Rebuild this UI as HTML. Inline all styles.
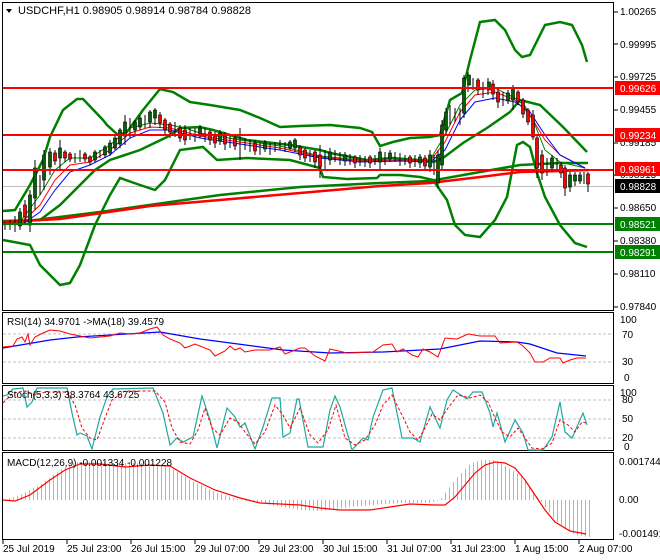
<!DOCTYPE html>
<html><head><meta charset="utf-8"><style>
html,body{margin:0;padding:0;background:#fff;}
svg{display:block;font-family:"Liberation Sans",Tahoma,sans-serif;}
</style></head><body>
<svg width="660" height="560" viewBox="0 0 660 560" xmlns="http://www.w3.org/2000/svg">
<defs>
<pattern id="hist" width="4" height="10" patternUnits="userSpaceOnUse"><rect x="1" y="0" width="1" height="10" fill="#b4b4b4"/></pattern>
</defs>
<rect width="660" height="560" fill="#fff"/>
<g fill="none" stroke="#000" stroke-width="1">
<rect x="2.5" y="2.5" width="611" height="308"/>
<rect x="2.5" y="312.5" width="611" height="71"/>
<rect x="2.5" y="385.5" width="611" height="65"/>
<rect x="2.5" y="452.5" width="611" height="87"/>
</g>
<line x1="3" y1="186.5" x2="613" y2="186.5" stroke="#c0c0c0"/>
<!-- bollinger -->
<polyline fill="none" stroke="#008000" stroke-width="2.5" points="3,211 15,210 30,185 43,160 50,137 63,110 77,99 83,99 103,120 107,125 118,135 127,132 143,110 160,89 173,92 190,102 210,105 240,110 260,118 280,127 300,126 330,125 360,128 372,132 380,146 393,142 410,138 430,137 440,135 450,100 462,93 470,60 480,22 495,20 505,30 515,50 522,57 530,55 545,25 560,22 572,25 582,45 587,62"/>
<polyline fill="none" stroke="#008000" stroke-width="2.5" points="3,221 40,220 60,205 80,185 95,170 110,160 140,150 167,137 180,128 200,127 213,130 247,140 290,145 320,150 330,153 367,160 393,158 433,162 443,158 463,143 487,128 510,112 520,100 540,105 563,127 587,152"/>
<polyline fill="none" stroke="#008000" stroke-width="2.5" points="3,240 30,245 40,265 60,285 70,283 80,265 95,225 110,195 120,178 140,185 155,190 165,180 180,150 203,147 217,160 247,158 290,160 320,168 323,177 347,179 377,178 380,175 400,175 420,177 433,180 447,200 455,225 465,235 480,237 495,220 507,197 517,145 523,142 530,147 537,173 545,197 560,225 575,243 587,247"/>
<polyline fill="none" stroke="#008000" stroke-width="2.5" points="3,224 100,212 220,195 300,187 380,183 430,181 480,172 520,165 560,163 588,163"/>
<polyline fill="none" stroke="#ff0000" stroke-width="2.5" points="3,222 60,219 150,206 220,200 300,193 380,186 430,183 480,177 520,172 560,171 588,170"/>
<!-- small MAs -->
<polyline fill="none" stroke="#008000" stroke-width="1" points="20,222 40,195 55,170 70,158 90,158 110,145 130,128 150,123 170,125 185,128 200,133 240,140 280,146 320,156 360,160 400,158 430,160 445,135 460,105 475,90 495,88 515,98 525,106 535,125 545,150 560,162 585,168"/>
<polyline fill="none" stroke="#ff0000" stroke-width="1" points="20,224 40,205 55,180 70,165 90,162 110,150 130,133 150,127 170,128 200,136 240,142 280,148 320,157 360,161 400,160 430,161 445,142 460,112 475,95 495,92 515,100 530,115 545,140 560,155 585,168"/>
<polyline fill="none" stroke="#0000ff" stroke-width="1" points="20,226 40,212 55,190 70,172 90,165 110,155 130,138 150,130 170,130 200,138 240,144 280,150 320,158 360,162 400,161 430,162 445,150 460,120 475,102 495,98 515,102 530,112 545,135 560,155 585,168"/>
<!-- candles: wicks -->
<g stroke="#000" stroke-width="1">
<line x1="5" y1="222" x2="5" y2="230"/><line x1="10" y1="220" x2="10" y2="230"/><line x1="15" y1="216" x2="15" y2="232"/><line x1="20" y1="208" x2="20" y2="230"/><line x1="25" y1="200" x2="25" y2="225"/><line x1="30" y1="190" x2="30" y2="232"/><line x1="35" y1="160" x2="35" y2="210"/><line x1="40" y1="175" x2="40" y2="195"/><line x1="44" y1="150" x2="44" y2="190"/><line x1="50" y1="148" x2="50" y2="175"/><line x1="55" y1="150" x2="55" y2="165"/><line x1="60" y1="140" x2="60" y2="170"/><line x1="65" y1="150" x2="65" y2="162"/><line x1="70" y1="152" x2="70" y2="162"/><line x1="75" y1="153" x2="75" y2="163"/><line x1="80" y1="150" x2="80" y2="162"/><line x1="85" y1="152" x2="85" y2="162"/><line x1="90" y1="155" x2="90" y2="165"/><line x1="95" y1="150" x2="95" y2="162"/><line x1="100" y1="150" x2="100" y2="158"/><line x1="105" y1="145" x2="105" y2="158"/><line x1="110" y1="140" x2="110" y2="156"/><line x1="115" y1="135" x2="115" y2="150"/><line x1="120" y1="128" x2="120" y2="148"/><line x1="125" y1="115" x2="125" y2="145"/><line x1="130" y1="118" x2="130" y2="138"/><line x1="135" y1="120" x2="135" y2="135"/><line x1="140" y1="115" x2="140" y2="130"/><line x1="145" y1="115" x2="145" y2="128"/><line x1="150" y1="110" x2="150" y2="128"/><line x1="155" y1="108" x2="155" y2="125"/><line x1="160" y1="112" x2="160" y2="128"/><line x1="165" y1="118" x2="165" y2="135"/><line x1="170" y1="122" x2="170" y2="138"/><line x1="175" y1="122" x2="175" y2="137"/><line x1="180" y1="125" x2="180" y2="142"/><line x1="185" y1="125" x2="185" y2="145"/><line x1="190" y1="128" x2="190" y2="140"/><line x1="195" y1="128" x2="195" y2="142"/><line x1="200" y1="125" x2="200" y2="138"/><line x1="205" y1="128" x2="205" y2="142"/><line x1="210" y1="130" x2="210" y2="145"/><line x1="215" y1="132" x2="215" y2="148"/><line x1="220" y1="130" x2="220" y2="145"/><line x1="225" y1="132" x2="225" y2="150"/><line x1="230" y1="135" x2="230" y2="148"/><line x1="235" y1="135" x2="235" y2="150"/><line x1="240" y1="128" x2="240" y2="160"/><line x1="245" y1="138" x2="245" y2="150"/><line x1="250" y1="140" x2="250" y2="152"/><line x1="255" y1="140" x2="255" y2="155"/><line x1="260" y1="142" x2="260" y2="155"/><line x1="265" y1="140" x2="265" y2="152"/><line x1="270" y1="143" x2="270" y2="155"/><line x1="275" y1="142" x2="275" y2="152"/><line x1="280" y1="140" x2="280" y2="150"/><line x1="285" y1="142" x2="285" y2="152"/><line x1="290" y1="140" x2="290" y2="150"/><line x1="295" y1="138" x2="295" y2="152"/><line x1="300" y1="145" x2="300" y2="160"/><line x1="305" y1="148" x2="305" y2="162"/><line x1="310" y1="150" x2="310" y2="162"/><line x1="315" y1="150" x2="315" y2="168"/><line x1="320" y1="145" x2="320" y2="178"/><line x1="325" y1="150" x2="325" y2="170"/><line x1="330" y1="148" x2="330" y2="165"/><line x1="335" y1="150" x2="335" y2="162"/><line x1="340" y1="152" x2="340" y2="165"/><line x1="345" y1="152" x2="345" y2="166"/><line x1="350" y1="154" x2="350" y2="165"/><line x1="355" y1="155" x2="355" y2="168"/><line x1="360" y1="155" x2="360" y2="166"/><line x1="365" y1="156" x2="365" y2="167"/><line x1="370" y1="155" x2="370" y2="168"/><line x1="375" y1="155" x2="375" y2="165"/><line x1="380" y1="148" x2="380" y2="170"/><line x1="385" y1="152" x2="385" y2="165"/><line x1="390" y1="150" x2="390" y2="162"/><line x1="395" y1="152" x2="395" y2="162"/><line x1="400" y1="153" x2="400" y2="166"/><line x1="405" y1="155" x2="405" y2="165"/><line x1="410" y1="155" x2="410" y2="168"/><line x1="415" y1="155" x2="415" y2="167"/><line x1="420" y1="154" x2="420" y2="168"/><line x1="425" y1="155" x2="425" y2="170"/><line x1="430" y1="150" x2="430" y2="172"/><line x1="434" y1="155" x2="434" y2="175"/><line x1="438" y1="150" x2="438" y2="188"/><line x1="442" y1="120" x2="442" y2="170"/><line x1="446" y1="108" x2="446" y2="135"/><line x1="450" y1="105" x2="450" y2="125"/><line x1="455" y1="108" x2="455" y2="122"/><line x1="460" y1="108" x2="460" y2="125"/><line x1="464" y1="75" x2="464" y2="118"/><line x1="468" y1="72" x2="468" y2="92"/><line x1="473" y1="78" x2="473" y2="90"/><line x1="478" y1="78" x2="478" y2="95"/><line x1="483" y1="82" x2="483" y2="98"/><line x1="488" y1="78" x2="488" y2="95"/><line x1="493" y1="80" x2="493" y2="100"/><line x1="498" y1="88" x2="498" y2="108"/><line x1="503" y1="92" x2="503" y2="106"/><line x1="508" y1="90" x2="508" y2="104"/><line x1="513" y1="85" x2="513" y2="110"/><line x1="518" y1="90" x2="518" y2="105"/><line x1="523" y1="98" x2="523" y2="118"/><line x1="528" y1="108" x2="528" y2="125"/><line x1="533" y1="110" x2="533" y2="140"/><line x1="537" y1="135" x2="537" y2="178"/><line x1="542" y1="150" x2="542" y2="180"/><line x1="547" y1="158" x2="547" y2="176"/><line x1="552" y1="155" x2="552" y2="172"/><line x1="557" y1="158" x2="557" y2="170"/><line x1="561" y1="162" x2="561" y2="178"/><line x1="565" y1="165" x2="565" y2="196"/><line x1="570" y1="172" x2="570" y2="192"/><line x1="575" y1="172" x2="575" y2="186"/><line x1="580" y1="172" x2="580" y2="184"/><line x1="584" y1="172" x2="584" y2="184"/><line x1="588" y1="172" x2="588" y2="192"/>
</g>
<!-- bodies: green (bull) -->
<g fill="#006400" stroke="#000" stroke-width="0.6">
<rect x="18.5" y="212" width="3" height="14"/><rect x="28.5" y="195" width="3" height="30"/><rect x="33.5" y="168" width="3" height="30"/><rect x="42.5" y="155" width="3" height="25"/><rect x="48.5" y="152" width="3" height="15"/><rect x="58.5" y="148" width="3" height="10"/><rect x="93.5" y="152" width="3" height="8"/><rect x="103.5" y="147" width="3" height="8"/><rect x="108.5" y="143" width="3" height="10"/><rect x="113.5" y="138" width="3" height="10"/><rect x="118.5" y="130" width="3" height="14"/><rect x="123.5" y="122" width="3" height="14"/><rect x="133.5" y="122" width="3" height="8"/><rect x="138.5" y="118" width="3" height="9"/><rect x="148.5" y="112" width="3" height="10"/><rect x="153.5" y="110" width="3" height="8"/><rect x="198.5" y="128" width="3" height="8"/><rect x="218.5" y="133" width="3" height="8"/><rect x="263.5" y="143" width="3" height="6"/><rect x="288.5" y="142" width="3" height="6"/><rect x="293.5" y="140" width="3" height="8"/><rect x="328.5" y="152" width="3" height="8"/><rect x="343.5" y="155" width="3" height="6"/><rect x="378.5" y="152" width="3" height="10"/><rect x="388.5" y="153" width="3" height="6"/><rect x="418.5" y="157" width="3" height="6"/><rect x="428.5" y="155" width="3" height="12"/><rect x="436.5" y="155" width="3" height="28"/><rect x="440.5" y="125" width="3" height="40"/><rect x="444.5" y="112" width="3" height="18"/><rect x="462.5" y="78" width="3" height="35"/><rect x="467.5" y="75" width="3" height="10"/><rect x="487.5" y="82" width="3" height="8"/><rect x="506.5" y="93" width="3" height="8"/><rect x="511.5" y="88" width="3" height="12"/><rect x="550.5" y="158" width="3" height="10"/><rect x="568.5" y="175" width="3" height="12"/><rect x="573.5" y="175" width="3" height="6"/><rect x="578.5" y="175" width="3" height="6"/>
</g>
<!-- bodies: red (bear) -->
<g fill="#ff0000" stroke="#000" stroke-width="0.6">
<rect x="23.5" y="205" width="3" height="12"/><rect x="53.5" y="153" width="3" height="8"/><rect x="63.5" y="152" width="3" height="6"/><rect x="68.5" y="154" width="3" height="5"/><rect x="83.5" y="154" width="3" height="5"/><rect x="88.5" y="157" width="3" height="5"/><rect x="158.5" y="115" width="3" height="8"/><rect x="163.5" y="120" width="3" height="10"/><rect x="168.5" y="124" width="3" height="8"/><rect x="178.5" y="128" width="3" height="10"/><rect x="183.5" y="130" width="3" height="10"/><rect x="208.5" y="132" width="3" height="8"/><rect x="213.5" y="135" width="3" height="8"/><rect x="223.5" y="136" width="3" height="8"/><rect x="233.5" y="138" width="3" height="8"/><rect x="253.5" y="143" width="3" height="8"/><rect x="298.5" y="147" width="3" height="8"/><rect x="303.5" y="150" width="3" height="8"/><rect x="313.5" y="152" width="3" height="10"/><rect x="318.5" y="155" width="3" height="12"/><rect x="353.5" y="157" width="3" height="6"/><rect x="368.5" y="157" width="3" height="6"/><rect x="408.5" y="157" width="3" height="6"/><rect x="423.5" y="158" width="3" height="8"/><rect x="476.5" y="80" width="3" height="10"/><rect x="491.5" y="84" width="3" height="10"/><rect x="496.5" y="92" width="3" height="10"/><rect x="516.5" y="92" width="3" height="10"/><rect x="521.5" y="100" width="3" height="14"/><rect x="526.5" y="110" width="3" height="12"/><rect x="531.5" y="115" width="3" height="22"/><rect x="535.5" y="138" width="3" height="30"/><rect x="540.5" y="155" width="3" height="18"/><rect x="559.5" y="165" width="3" height="8"/><rect x="563.5" y="168" width="3" height="20"/><rect x="586.5" y="174" width="3" height="10"/>
</g>
<!-- levels -->
<line x1="3" y1="88" x2="613" y2="88" stroke="#ff0000" stroke-width="2"/>
<line x1="3" y1="135" x2="613" y2="135" stroke="#ff0000" stroke-width="2"/>
<line x1="3" y1="170" x2="613" y2="170" stroke="#ff0000" stroke-width="2"/>
<line x1="3" y1="224" x2="613" y2="224" stroke="#008000" stroke-width="2"/>
<line x1="3" y1="252" x2="613" y2="252" stroke="#008000" stroke-width="2"/>
<path d="M6,9 L12,9 L9,13 Z" fill="#000"/>
<text x="18" y="14" font-size="11">USDCHF,H1  0.98905 0.98914 0.98784 0.98828</text>
<g font-size="10" fill="#000">
<g stroke="#000"><line x1="614" y1="12" x2="618" y2="12"/><line x1="614" y1="44" x2="618" y2="44"/><line x1="614" y1="77" x2="618" y2="77"/><line x1="614" y1="110" x2="618" y2="110"/><line x1="614" y1="143" x2="618" y2="143"/><line x1="614" y1="175" x2="618" y2="175"/><line x1="614" y1="208" x2="618" y2="208"/><line x1="614" y1="241" x2="618" y2="241"/><line x1="614" y1="274" x2="618" y2="274"/><line x1="614" y1="307" x2="618" y2="307"/></g>
<text x="620" y="15">1.00265</text>
<text x="620" y="48">0.99995</text>
<text x="620" y="80">0.99725</text>
<text x="620" y="113">0.99455</text>
<text x="620" y="146">0.99185</text>
<text x="620" y="178">0.98915</text>
<text x="620" y="211">0.98650</text>
<text x="620" y="244">0.98380</text>
<text x="620" y="277">0.98110</text>
<text x="620" y="310">0.97840</text>
<rect x="615" y="81" width="45" height="14" fill="#ff0000"/><text x="620" y="92" fill="#fff">0.99626</text>
<rect x="615" y="128" width="45" height="14" fill="#ff0000"/><text x="620" y="139" fill="#fff">0.99234</text>
<rect x="615" y="162" width="45" height="14" fill="#ff0000"/><text x="620" y="173" fill="#fff">0.98961</text>
<rect x="615" y="179" width="45" height="14" fill="#000"/><text x="620" y="190" fill="#fff">0.98828</text>
<rect x="615" y="217" width="45" height="14" fill="#008000"/><text x="620" y="228" fill="#fff">0.98521</text>
<rect x="615" y="245" width="45" height="14" fill="#008000"/><text x="620" y="256" fill="#fff">0.98291</text>
</g>
<!-- RSI -->
<g stroke="#c0c0c0" stroke-dasharray="3,2"><line x1="3" y1="334" x2="613" y2="334"/><line x1="3" y1="362" x2="613" y2="362"/></g>
<polyline fill="none" stroke="#0000ff" stroke-width="1.2" points="3,348 50,340 77,337 160,332 200,339 283,350 330,353 383,352 440,349 480,341 517,342 530,344 557,353 586,356"/>
<polyline fill="none" stroke="#ff0000" stroke-width="1" points="3,347 13,346 17,339 22,337 25,342 28,334 30,345 35,337 43,333 50,330 60,331 70,334 80,336 90,338 100,337 110,336 120,333 130,334 140,333 150,329 157,327 163,335 170,339 180,343 185,348 195,344 210,350 215,356 225,351 230,346 235,350 240,348 245,352 255,350 270,350 280,347 285,354 290,352 300,348 305,348 315,356 325,361 330,349 347,353 373,352 383,345 392,344 397,352 403,349 412,355 418,357 423,349 430,352 438,357 445,338 457,339 468,334 480,336 495,336 500,343 517,342 523,346 530,353 535,362 543,362 550,358 560,358 563,363 570,360 577,358 586,358"/>
<text x="7" y="325" font-size="10">RSI(14) 34.9701   -&gt;MA(18) 39.4579</text>
<g font-size="10"><text x="620" y="323">100</text><text x="622" y="338">70</text><text x="622" y="365">30</text><text x="624" y="381">0</text></g>
<!-- Stoch -->
<g stroke="#c0c0c0" stroke-dasharray="3,2"><line x1="3" y1="400" x2="613" y2="400"/><line x1="3" y1="419" x2="613" y2="419"/><line x1="3" y1="438" x2="613" y2="438"/></g>
<polyline fill="none" stroke="#20a8a0" stroke-width="1.2" points="3,396 7,395 13,389 23,388 27,407 32,402 37,388 67,388 72,413 77,435 80,433 87,436 92,449 100,417 107,397 113,389 153,388 163,413 170,445 177,438 183,442 193,437 202,396 210,420 217,448 227,408 235,417 240,427 245,423 255,449 263,427 272,398 280,398 283,437 290,433 297,399 299,399 308,447 323,447 330,410 335,396 340,407 352,450 363,438 368,440 373,417 383,390 392,388 402,438 413,438 420,442 430,407 440,428 447,400 453,390 467,399 473,392 482,392 490,413 493,427 497,413 505,442 515,420 523,433 528,450 543,450 552,437 560,402 565,432 572,438 583,413 587,425"/>
<polyline fill="none" stroke="#ff0000" stroke-width="1" stroke-dasharray="3,2" points="3,403 13,393 25,391 35,395 45,392 67,392 75,405 82,428 90,438 97,440 105,418 112,400 125,391 155,391 165,402 172,428 180,442 190,444 198,430 205,408 212,428 220,435 230,418 238,422 245,432 255,444 265,432 275,405 283,415 290,428 300,408 310,435 318,443 328,430 336,405 345,438 355,445 365,440 375,425 383,405 392,395 402,415 410,432 418,440 425,428 432,414 440,420 448,408 458,395 470,398 480,395 488,402 495,418 502,432 510,437 518,428 525,438 532,448 542,449 552,443 560,420 568,425 575,432 582,422 586,423"/>
<text x="7" y="398" font-size="10">Stoch(5,3,3) 38.3764 43.6725</text>
<g font-size="10"><text x="620" y="396">100</text><text x="622" y="403">80</text><text x="622" y="422">50</text><text x="622" y="441">20</text><text x="624" y="450">0</text></g>
<!-- MACD -->
<polygon fill="url(#hist)" points="3,500 20,495 40,485 60,470 75,462 100,462 140,463 165,466 175,470 190,480 215,492 240,500 260,503 300,510 320,511 360,506 400,503 430,503 440,500 455,480 470,464 480,460 495,460 505,466 520,475 532,490 540,500 590,500 590,537 575,535 555,520 540,500 535,500 520,500 440,500 3,500"/>
<polyline fill="none" stroke="#ff0000" stroke-width="1.2" points="3,500 15,501 30,495 50,480 65,470 80,464 100,464 125,467 150,465 170,466 190,478 215,490 240,498 260,503 300,505 320,508 340,510 370,510 390,507 410,504 435,505 445,505 455,497 465,485 475,473 485,465 495,462 505,463 515,468 525,480 535,495 545,510 555,522 570,531 586,534"/>
<text x="7" y="466" font-size="10">MACD(12,26,9) -0.001334 -0.001228</text>
<g font-size="10"><text x="619" y="465">0.001744</text><text x="619" y="503">0.00</text><text x="619" y="537">-0.001491</text></g>
<g stroke="#000"><line x1="3" y1="540" x2="3" y2="544"/><line x1="67" y1="540" x2="67" y2="544"/><line x1="131" y1="540" x2="131" y2="544"/><line x1="195" y1="540" x2="195" y2="544"/><line x1="259" y1="540" x2="259" y2="544"/><line x1="323" y1="540" x2="323" y2="544"/><line x1="387" y1="540" x2="387" y2="544"/><line x1="451" y1="540" x2="451" y2="544"/><line x1="515" y1="540" x2="515" y2="544"/><line x1="579" y1="540" x2="579" y2="544"/></g>
<g font-size="10">
<text x="3" y="552">25 Jul 2019</text>
<text x="67" y="552">25 Jul 23:00</text>
<text x="131" y="552">26 Jul 15:00</text>
<text x="195" y="552">29 Jul 07:00</text>
<text x="259" y="552">29 Jul 23:00</text>
<text x="323" y="552">30 Jul 15:00</text>
<text x="387" y="552">31 Jul 07:00</text>
<text x="451" y="552">31 Jul 23:00</text>
<text x="515" y="552">1 Aug 15:00</text>
<text x="579" y="552">2 Aug 07:00</text>
</g>
</svg>
</body></html>
